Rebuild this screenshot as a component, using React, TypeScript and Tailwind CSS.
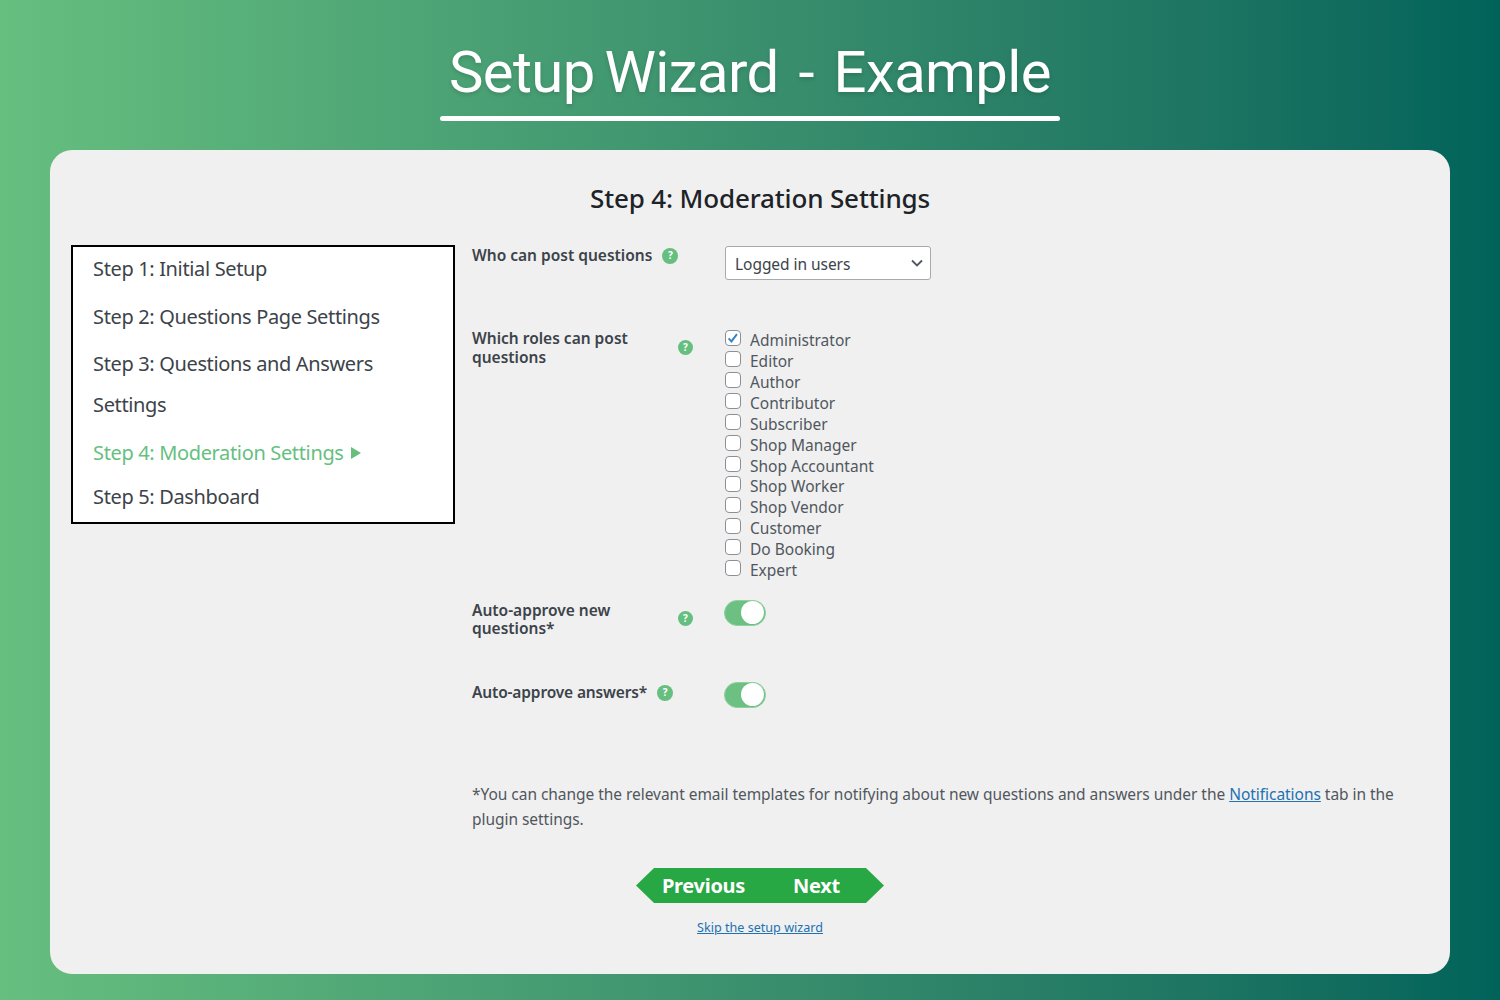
const roles = [
  "Administrator",
  "Editor",
  "Author",
  "Contributor",
  "Subscriber",
  "Shop Manager",
  "Shop Accountant",
  "Shop Worker",
  "Shop Vendor",
  "Customer",
  "Do Booking",
  "Expert",
];

function Help({ small }: { small?: boolean }) {
  return (
    <span
      className={`inline-flex shrink-0 items-center justify-center rounded-full bg-[#66bf7f] font-bold text-white ${
        small ? "h-[15px] w-[15px] text-[10px]" : "h-4 w-4 text-[10px]"
      }`}
    >
      ?
    </span>
  );
}

function Toggle() {
  return (
    <div className="flex h-[26px] w-[42px] items-center justify-end rounded-full border border-[#8fd0a0] bg-[#6cc082] pr-px">
      <div className="h-[23px] w-[23px] rounded-full bg-white" />
    </div>
  );
}

function Role({ name, checked }: { name: string; checked?: boolean }) {
  return (
    <div className="flex h-[20.9px] items-center">
      <span className="mb-[3px] flex h-4 w-4 items-center justify-center rounded-[4px] border border-[#8c8f94] bg-white">
        {checked && (
          <svg viewBox="0 0 16 16" className="h-[14px] w-[14px]">
            <path d="M3 8.5l3.2 3.4L12.5 3.5" fill="none" stroke="#3582c4" strokeWidth="2.2" />
          </svg>
        )}
      </span>
      <span className="mt-[2px] ml-[9px] text-[15.5px] leading-[21px] text-[#50575e]">{name}</span>
    </div>
  );
}

function Step({ children, active, className }: { children: React.ReactNode; active?: boolean; className: string }) {
  return (
    <div className={`${active ? "text-[#66bf7f]" : "text-[#3c434a]"} ${className}`}>{children}</div>
  );
}

export default function App() {
  return (
    <div className="h-[1000px] bg-linear-to-r from-[#66bf7f] to-[#00635a] px-[50px] font-['Noto_Sans','Open_Sans',sans-serif]">
      <header className="flex h-[150px] justify-center">
        <div className="w-[620px] pt-[37px] text-center">
          <h1 className="font-['Roboto',sans-serif] text-[58px] leading-[70px] font-normal tracking-[-0.6px] whitespace-nowrap text-white [word-spacing:-4px] [text-shadow:0_2px_4px_rgba(0,0,0,0.15)]">
            Setup Wizard <span className="mx-[10px]">-</span> Example
          </h1>
          <div className="mt-[9px] h-[5px] rounded-full bg-white" />
        </div>
      </header>

      <div className="h-[824px] rounded-[22px] bg-[#f0f0f0]">
        <h2 className="pt-[29px] pl-[20px] text-center text-[26px] leading-[38px] font-medium tracking-[-0.15px] text-[#1d2327]">
          Step 4: Moderation Settings
        </h2>

        <div className="mt-[28px] flex pl-[21px]">
          <nav className="h-[279px] w-[384px] shrink-0 border-2 border-black bg-white pl-[20px] text-[20px] tracking-[-0.35px]">
            <Step className="pt-[1px] leading-[41px]">Step 1: Initial Setup</Step>
            <Step className="mt-[7px] leading-[41px]">Step 2: Questions Page Settings</Step>
            <Step className="mt-[6px] leading-[41px]">
              Step 3: Questions and Answers
              <br />
              Settings
            </Step>
            <Step active className="mt-[7px] flex items-center leading-[41px]">
              Step 4: Moderation Settings
              <span className="ml-[7px] h-0 w-0 border-y-[6px] border-l-[10px] border-y-transparent border-l-[#66bf7f]" />
            </Step>
            <Step className="mt-[3px] leading-[41px]">Step 5: Dashboard</Step>
          </nav>

          <div className="ml-[17px] w-[930px]">
            <div className="flex h-[84px]">
              <div className="flex h-5 w-[253px] items-center gap-[10px] pt-[1px] text-[15.5px] font-semibold text-[#3c434a]">
                Who can post questions
                <Help />
              </div>
              <div className="mt-px flex h-[34px] w-[206px] items-center justify-between rounded-[3px] border border-[#a7aaad] bg-white pt-[3px] pr-[3px] pl-[9px] text-[15.5px] tracking-[-0.05px] text-[#3c434a]">
                Logged in users
                <svg viewBox="0 0 20 20" className="mb-[3px] h-5 w-5">
                  <path d="M5 7.5l5 5 5-5" fill="none" stroke="#50575e" strokeWidth="1.8" />
                </svg>
              </div>
            </div>

            <div className="flex">
              <div className="flex w-[253px] items-start">
                <div className="w-[206px] text-[15.5px] leading-[18.5px] font-semibold text-[#3c434a]">
                  Which roles can post questions
                </div>
                <span className="mt-[4px]">
                  <Help small />
                </span>
              </div>
              <div className="pt-[0.3px]">
                {roles.map((r, i) => (
                  <Role key={r} name={r} checked={i === 0} />
                ))}
              </div>
            </div>

            <div className="mt-[19.9px] flex h-[82px]">
              <div className="flex h-[38px] w-[252px] items-start">
                <div className="w-[206px] pt-[1px] text-[15.5px] leading-[18.5px] font-semibold text-[#3c434a]">
                  Auto-approve new questions*
                </div>
                <span className="mt-[4px]">
                  <Help small />
                </span>
              </div>
              <Toggle />
            </div>

            <div className="flex h-[26px]">
              <div className="flex h-5 w-[252px] items-center gap-[10px] pt-[2px] text-[15.5px] font-semibold tracking-[-0.15px] text-[#3c434a]">
                Auto-approve answers*
                <Help />
              </div>
              <Toggle />
            </div>

            <p className="mt-[74px] w-[925px] text-[15.5px] leading-[25px] tracking-[-0.04px] text-[#50575e]">
              *You can change the relevant email templates for notifying about new questions and answers under the{" "}
              <a className="text-[#2271b1] underline">Notifications</a> tab in the plugin settings.
            </p>
          </div>
        </div>

        <div className="mt-[36px] flex flex-col items-center pl-[20px]">
          <div className="flex h-[35px] w-[248px] text-[20px] leading-[35px] font-bold tracking-[-0.3px] text-white">
            <a className="w-[124px] bg-[#28a745] pl-[26px] [clip-path:polygon(0_50%,18px_0,100%_0,100%_100%,18px_100%)]">
              Previous
            </a>
            <a className="w-[124px] bg-[#28a745] pl-[33px] [clip-path:polygon(0_0,calc(100%-18px)_0,100%_50%,calc(100%-18px)_100%,0_100%)]">
              Next
            </a>
          </div>
          <a className="mt-[16px] text-[12.6px] leading-[18px] text-[#2271b1] underline">Skip the setup wizard</a>
        </div>
      </div>
    </div>
  );
}
